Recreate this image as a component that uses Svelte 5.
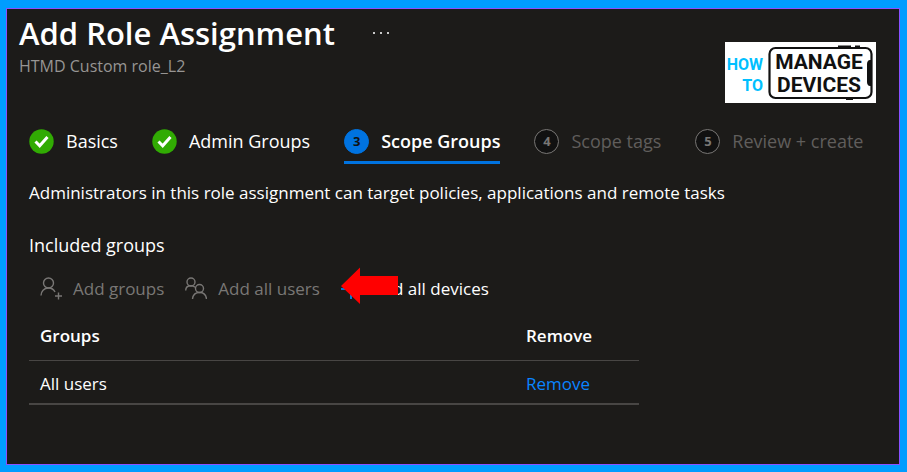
<script lang="ts">
    interface Step {
        label: string;
        state: "done" | "current" | "todo";
    }

    interface Group {
        id: number;
        name: string;
    }

    const steps: Step[] = [
        { label: "Basics", state: "done" },
        { label: "Admin Groups", state: "done" },
        { label: "Scope Groups", state: "current" },
        { label: "Scope tags", state: "todo" },
        { label: "Review + create", state: "todo" },
    ];

    let groups = $state<Group[]>([{ id: 1, name: "All users" }]);

    function removeGroup(e: Event, id: number) {
        e.preventDefault();
        groups = groups.filter((g) => g.id !== id);
    }
</script>

<main class="page">
    <header>
        <div>
            <div class="title">
                <h1>Add Role Assignment</h1>
                <button class="more" aria-label="More options">
                    <svg width="16" height="4" viewBox="0 0 16 4" fill="#c8c8c8">
                        <rect x="0" y="1" width="2" height="2" />
                        <rect x="7" y="1" width="2" height="2" />
                        <rect x="14" y="1" width="2" height="2" />
                    </svg>
                </button>
            </div>
            <p class="subtitle">HTMD Custom role_L2</p>
        </div>
        <svg class="logo" width="151" height="61" viewBox="0 0 151 61" role="img" aria-label="How to manage devices">
            <rect width="151" height="61" fill="#fff" />
            <rect x="44.500" y="6" width="102" height="50" rx="6" fill="none" stroke="#111" stroke-width="2.200" />
            <path d="M113 4.500h13M130 4.500h5M121 57h7" stroke="#111" stroke-width="2" />
            <path d="M147 18v26h-2c-2 0-3-2-3-4V22c0-2 1-4 3-4z" fill="#111" />
            <g class="how">
                <text x="38" y="28" text-anchor="end">HOW</text>
                <text x="38" y="49" text-anchor="end">TO</text>
            </g>
            <g class="manage">
                <text x="94" y="27" text-anchor="middle">MANAGE</text>
                <text x="94" y="50" text-anchor="middle">DEVICES</text>
            </g>
        </svg>
    </header>

    <nav class="steps">
        {#each steps as step, i}
            <a href="#step-{i + 1}" class="step {step.state}">
                {#if step.state === "done"}
                    <svg width="25" height="25" viewBox="0 0 25 25">
                        <circle cx="12.500" cy="12.500" r="12.200" fill="#31ab03" />
                        <path d="M6.500 12.500l4.200 4.200 7.800-8.700" fill="none" stroke="#fff" stroke-width="3" />
                    </svg>
                {:else}
                    <span class="number">{i + 1}</span>
                {/if}
                <span>{step.label}</span>
            </a>
        {/each}
    </nav>

    <p class="description">Administrators in this role assignment can target policies, applications and remote tasks</p>

    <h2>Included groups</h2>
    <div class="toolbar">
        <button disabled>
            <svg width="22" height="24" viewBox="0 0 22 24" fill="none" stroke="currentColor" stroke-width="1.400">
                <circle cx="8.500" cy="6" r="5" />
                <path d="M1 18.500c0-4 3-7.500 7.500-7.500 3 0 5.300 1.500 6.500 4M18.500 15.500v7M15 19h7" />
            </svg>
            Add groups
        </button>
        <button disabled>
            <svg width="22" height="24" viewBox="0 0 22 24" fill="none" stroke="currentColor" stroke-width="1.400">
                <circle cx="6" cy="5" r="4" />
                <circle cx="14.500" cy="11.500" r="4" />
                <path d="M.7 13.500c0-3 2-4.700 5.300-4.700 1.700 0 3 .5 4 1.500M7.500 22c.4-4 3.200-6.500 7-6.500s6.600 2.500 7 6.500" />
            </svg>
            Add all users
        </button>
        <button>
            <span class="marked">
                <svg width="20" height="20" viewBox="0 0 20 20" fill="none" stroke="#0078d4" stroke-width="2">
                    <path d="M0 10h20M10 0v20" />
                </svg>
                <svg class="arrow" width="58" height="38" viewBox="0 0 58 38" fill="#f00">
                    <path d="M0 19L19 .5V9h38v19H19v9z" />
                </svg>
            </span>
            Add all devices
        </button>
    </div>

    <table>
        <thead>
            <tr>
                <th>Groups</th>
                <th class="action">Remove</th>
            </tr>
        </thead>
        <tbody>
            {#each groups as group (group.id)}
                <tr>
                    <td>{group.name}</td>
                    <td class="action"><a href="#remove" onclick={(e) => removeGroup(e, group.id)}>Remove</a></td>
                </tr>
            {/each}
        </tbody>
    </table>
</main>

<style>
    :global(body) {
        margin: 0;
        background: #009dff;
    }
    .page {
        box-sizing: border-box;
        min-height: calc(100vh - 15px);
        margin: 8px 7px 7px 6px;
        padding: 0 23px 24px 22px;
        border: 1px solid #8a50ff;
        background: #1c1b19;
        color: #fff;
        font-family: "Segoe UI", "Open Sans", "Noto Sans", sans-serif;
        font-size: 17px;
        line-height: 24px;
    }
    h1, h2, p {
        margin: 0;
    }
    button {
        padding: 0;
        border: 0;
        background: none;
        color: inherit;
        font: inherit;
    }
    header {
        display: flex;
        justify-content: space-between;
        align-items: flex-end;
        margin-left: -10px;
    }
    .title {
        display: flex;
        align-items: center;
        gap: 38px;
        padding-top: 3px;
    }
    h1 {
        font-size: 31px;
        line-height: 42px;
        font-weight: 600;
    }
    .more {
        display: flex;
    }
    .subtitle {
        margin-bottom: 33px;
        color: #979593;
        font-size: 16px;
    }
    .logo {
        flex: none;
        margin-bottom: 8px;
        font-family: Roboto, sans-serif;
        font-weight: 700;
    }
    .how {
        fill: #00bfff;
        font-size: 16px;
    }
    .manage {
        fill: #111;
        font-size: 21px;
    }
    .steps {
        display: flex;
        gap: 34px;
        margin-top: 12px;
        font-size: 18px;
        white-space: nowrap;
    }
    .step {
        display: flex;
        align-items: center;
        gap: 12px;
        height: 36px;
        padding-bottom: 2px;
        border-bottom: 3px solid transparent;
        color: inherit;
        text-decoration: none;
    }
    .current {
        border-color: #0073e0;
        font-weight: 600;
    }
    .todo {
        color: #605e5c;
    }
    .number {
        box-sizing: border-box;
        width: 25px;
        height: 25px;
        border: 1px solid #797775;
        border-radius: 50%;
        background: #111;
        color: #797775;
        font-size: 13px;
        line-height: 23px;
        font-weight: 700;
        text-align: center;
    }
    .current .number {
        border-color: #0073e0;
        background: #0073e0;
        color: #111;
    }
    .description {
        margin-top: 17px;
    }
    h2 {
        margin-top: 28px;
        font-size: 18px;
        font-weight: 400;
    }
    .toolbar {
        display: flex;
        gap: 21px;
        margin: 18px 0 0 11px;
    }
    .toolbar button {
        display: flex;
        align-items: center;
        gap: 11px;
        height: 28px;
    }
    .toolbar button:disabled {
        color: #797775;
    }
    .marked {
        display: flex;
        position: relative;
    }
    .arrow {
        position: absolute;
        top: -12px;
        left: 0;
    }
    table {
        width: 610px;
        max-width: 100%;
        margin-top: 9px;
        border-collapse: collapse;
    }
    th, td {
        padding: 0 11px;
        border-bottom: 1px solid #484644;
        text-align: left;
    }
    th {
        height: 48px;
        font-weight: 600;
    }
    td {
        height: 38px;
        padding-top: 4px;
        border-bottom-width: 2px;
    }
    .action {
        width: 102px;
    }
    td a {
        color: #0a84ff;
        text-decoration: none;
    }
</style>
